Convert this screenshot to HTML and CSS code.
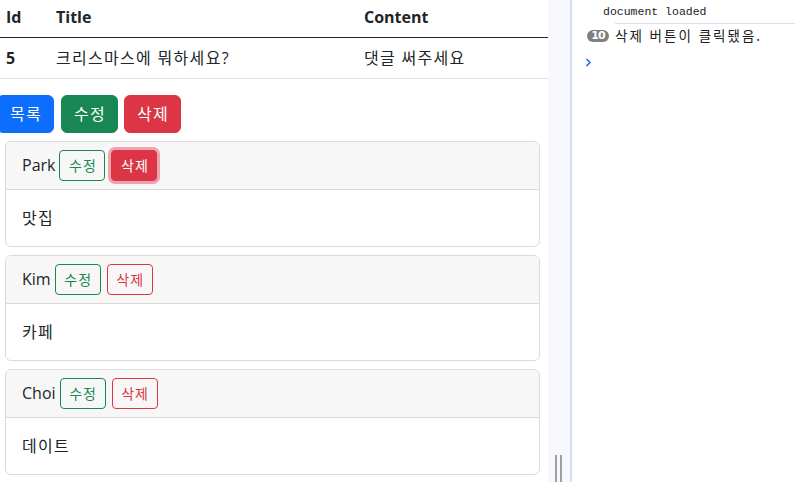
FILE: index.html
```html
<!DOCTYPE html>
<html lang="ko">
<head>
<meta charset="utf-8">
<title>Board</title>
<link rel="stylesheet" href="styles.css">
</head>
<body>
<div class="layout">
  <main class="page">
    <table class="board">
      <thead>
        <tr><th class="c-id">Id</th><th class="c-title">Title</th><th class="c-content">Content</th></tr>
      </thead>
      <tbody>
        <tr><td class="c-id bold">5</td><td class="ko-text">크리스마스에 뭐하세요?</td><td class="ko-text">댓글 써주세요</td></tr>
      </tbody>
    </table>
    <div class="actions">
      <button class="btn btn-primary">목록</button>
      <button class="btn btn-success">수정</button>
      <button class="btn btn-danger">삭제</button>
    </div>
    <div class="card">
      <div class="card-header">
        <span class="name">Park</span>
        <button class="btn-sm outline-success">수정</button>
        <button class="btn-sm solid-danger focused">삭제</button>
      </div>
      <div class="card-body ko-text">맛집</div>
    </div>
    <div class="card">
      <div class="card-header">
        <span class="name">Kim</span>
        <button class="btn-sm outline-success">수정</button>
        <button class="btn-sm outline-danger">삭제</button>
      </div>
      <div class="card-body ko-text">카페</div>
    </div>
    <div class="card">
      <div class="card-header">
        <span class="name">Choi</span>
        <button class="btn-sm outline-success">수정</button>
        <button class="btn-sm outline-danger">삭제</button>
      </div>
      <div class="card-body ko-text">데이트</div>
    </div>
  </main>
  <div class="strip">
    <div class="grip"><span></span><span></span></div>
  </div>
  <section class="console">
    <div class="log first"><span class="msg">document loaded</span></div>
    <div class="log"><span class="badge">10</span><span class="msg ko">삭제 버튼이 클릭됐음.</span></div>
    <div class="prompt">
      <svg width="7" height="9" viewBox="0 0 7 9"><path d="M1.5 1 L5 4.5 L1.5 8" fill="none" stroke="#1a73e8" stroke-width="1.6"/></svg>
    </div>
  </section>
</div>
</body>
</html>
```

FILE: styles.css
```css
* { box-sizing: border-box; }
html, body { margin: 0; padding: 0; height: 100%; overflow: hidden; background: #fff; }
body {
  font-family: "Open Sans", "Noto Sans CJK KR", sans-serif;
  font-size: 16px;
  line-height: 24px;
  color: #212529;
}
.layout { display: flex; height: 482px; }
.page { width: 548px; flex: none; overflow: hidden; }
.ko-text { letter-spacing: 1.3px; }

.board {
  border-collapse: collapse;
  width: 550px;
  margin: -3px 0 16px -2px;
  table-layout: fixed;
}
.board th, .board td { padding: 8px; text-align: left; vertical-align: top; }
.board th { font-weight: 700; border-bottom: 1px solid #212529; }
.board td { border-bottom: 1px solid #dee2e6; }
.board .c-id { width: 50px; }
.board .c-title { width: 308px; }
.board .bold { font-weight: 700; }

.actions { display: flex; gap: 7px; margin-left: -3px; margin-bottom: 8px; }
.actions .btn + .btn + .btn { margin-left: -1px; }
.btn {
  font-family: inherit; font-size: 16px; line-height: 24px; letter-spacing: 1.3px;
  width: 57px; padding: 6px 0 6px 1px; text-align: center;
  border: 1px solid transparent; border-radius: 6px;
  color: #fff; cursor: pointer;
}
.btn-primary { background: #0d6efd; border-color: #0d6efd; }
.btn-success { background: #198754; border-color: #198754; }
.btn-danger { background: #dc3545; border-color: #dc3545; }

.card {
  margin: 0 8px 8px 5px;
  border: 1px solid #dadada;
  border-radius: 6px;
}
.card-header {
  display: flex; align-items: center; gap: 6px;
  padding: 8px 16px;
  background: #f7f7f7;
  border-bottom: 1px solid #dadada;
  border-radius: 5px 5px 0 0;
}
.name { margin-right: -2px; margin-top: -1px; }
.btn-sm {
  font-family: inherit; font-size: 14px; line-height: 21px; letter-spacing: 1px;
  width: 46px; padding: 4px 0 4px 1px; text-align: center;
  border-radius: 4px; border: 1px solid; background: transparent;
  cursor: pointer;
}
.outline-success { color: #198754; border-color: #198754; }
.outline-danger { color: #dc3545; border-color: #dc3545; }
.solid-danger { color: #fff; background: #dc3545; border-color: #dc3545; }
.focused { box-shadow: 0 0 0 3px rgba(225, 83, 97, 0.5); }
.card-body { padding: 16px; }

.strip {
  width: 24px; flex: none;
  background: #f7f8fd;
  border-right: 2px solid #d3def5;
  display: flex; flex-direction: column; justify-content: flex-end; align-items: flex-start;
}
.grip { display: flex; gap: 3px; margin-left: 7px; }
.grip span { display: block; width: 2px; height: 27px; background: #a0a0a0; }

.console {
  flex: 1; background: #fff;
  font-family: "Liberation Mono", "Noto Sans CJK KR", monospace;
  font-size: 11.5px; color: #202124;
}
.log { display: flex; align-items: center; }
.log.first {
  height: 24px; border-bottom: 1px solid #d6e0f5; margin-left: 43px;
  align-items: flex-start; padding-top: 4px;
}
.log.first .msg { margin-left: -12px; line-height: 16px; }
.log:not(.first) { padding-left: 15px; height: 23px; }
.badge {
  display: inline-flex; align-items: center; justify-content: center;
  width: 22px; height: 12px; border-radius: 6px;
  background: #808080; color: #fff;
  font-family: "DejaVu Sans", sans-serif; font-weight: 700; font-size: 11px; letter-spacing: -0.8px;
  margin-right: 6px;
}
.ko { font-family: "Noto Sans CJK KR", sans-serif; font-size: 13.5px; letter-spacing: 2px; margin-top: -1px; }
.prompt { padding-left: 13px; padding-top: 11px; height: 24px; }
.prompt svg { display: block; }
```
